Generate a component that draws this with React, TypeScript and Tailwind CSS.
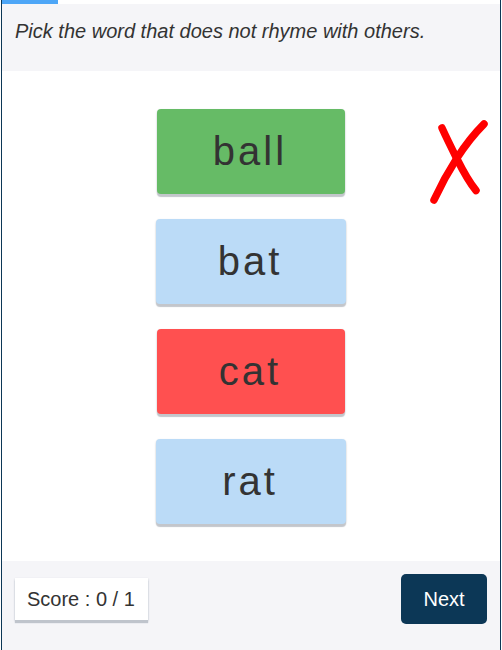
import { useState } from 'react';

type Answer = { word: string; tone: string };

const answers: Answer[] = [
  { word: 'ball', tone: 'mx-px bg-[#66bb66]' },
  { word: 'bat', tone: 'bg-[#bbdbf7]' },
  { word: 'cat', tone: 'mx-px bg-[#ff5050]' },
  { word: 'rat', tone: 'bg-[#bbdbf7]' },
];

function WrongMark() {
  return (
    <svg
      viewBox="0 0 60 86"
      role="img"
      aria-label="Wrong answer"
      className="absolute top-12 right-3 h-[86px] w-[60px]"
      fill="none"
      stroke="#ff0000"
      strokeLinecap="round"
      strokeLinejoin="round"
    >
      <path d="M14 9C19 20 24 30 29 40C34 50 41 63 48 71.5" strokeWidth="7.5" />
      <path d="M56 5C48 13 38 25 29 39C20 53 12 68 6 81" strokeWidth="7.5" />
    </svg>
  );
}

export default function App() {
  const [picked, setPicked] = useState('cat');

  return (
    <div className="mx-px flex min-h-screen flex-col border-x border-[#0c3756] bg-white font-['Liberation_Sans',Arial,sans-serif] text-[#333333]">
      <div className="h-1">
        <div className="h-full w-14 bg-[#4da6f7]" />
      </div>
      <header className="bg-[#f5f5f8] px-[13px] pt-3 pb-[25px]">
        <h1 className="text-xl leading-[30px] italic">Pick the word that does not rhyme with others.</h1>
      </header>
      <main className="relative flex grow flex-col items-center gap-[25px] pt-[38px] pb-9">
        {answers.map(({ word, tone }) => (
          <div key={word} className="flex w-[190px]">
            <button
              type="button"
              aria-pressed={picked === word}
              onClick={() => setPicked(word)}
              className={`h-[85px] grow rounded pr-0.5 pb-0.5 text-[40px] leading-[48px] tracking-[3px] shadow-[0_3px_1px_#c3c6cb,0_1px_2px_#c3c6cb] ${tone}`}
            >
              {word}
            </button>
          </div>
        ))}
        <WrongMark />
      </main>
      <footer className="flex items-start justify-between bg-[#f5f5f8] px-[13px] pt-[13px] pb-[26px] text-xl leading-[30px]">
        <p className="mt-1 bg-white py-[6px] pr-[13px] pl-3 shadow-[0_3px_1px_#bfc4cc,0_1px_2px_#bfc4cc]">Score : 0 / 1</p>
        <button type="button" className="h-[50px] w-[86px] rounded-[5px] bg-[#0c3756] text-white">
          Next
        </button>
      </footer>
    </div>
  );
}
